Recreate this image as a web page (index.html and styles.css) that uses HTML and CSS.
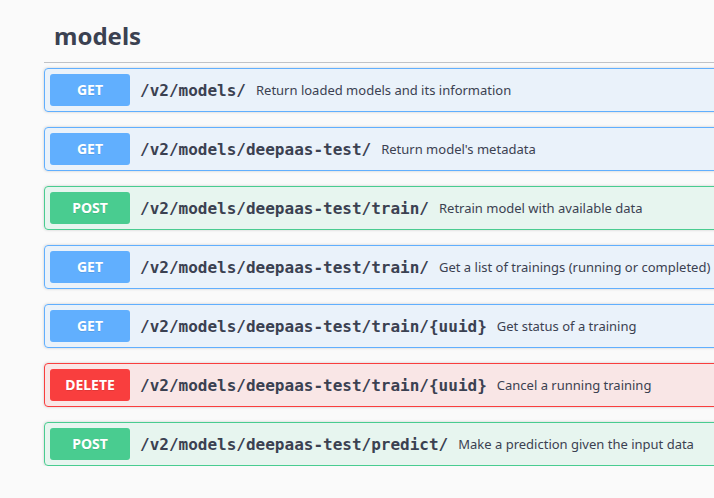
FILE: index.html
```html
<!DOCTYPE html>
<html>
<head>
<meta charset="utf-8">
<link rel="stylesheet" href="styles.css">
</head>
<body>
<div class="wrapper">
  <h3 class="tag">models</h3>
  <div class="ops">
    <div class="op get">
      <span class="method">GET</span>
      <span class="path">/v2/models/</span>
      <span class="desc">Return loaded models and its information</span>
    </div>
    <div class="op get">
      <span class="method">GET</span>
      <span class="path">/v2/models/deepaas-test/</span>
      <span class="desc">Return model's metadata</span>
    </div>
    <div class="op post">
      <span class="method">POST</span>
      <span class="path">/v2/models/deepaas-test/train/</span>
      <span class="desc">Retrain model with available data</span>
    </div>
    <div class="op get">
      <span class="method">GET</span>
      <span class="path">/v2/models/deepaas-test/train/</span>
      <span class="desc">Get a list of trainings (running or completed)</span>
    </div>
    <div class="op get">
      <span class="method">GET</span>
      <span class="path">/v2/models/deepaas-test/train/{uuid}</span>
      <span class="desc">Get status of a training</span>
    </div>
    <div class="op delete">
      <span class="method">DELETE</span>
      <span class="path">/v2/models/deepaas-test/train/{uuid}</span>
      <span class="desc">Cancel a running training</span>
    </div>
    <div class="op post">
      <span class="method">POST</span>
      <span class="path">/v2/models/deepaas-test/predict/</span>
      <span class="desc">Make a prediction given the input data</span>
    </div>
  </div>
</div>
</body>
</html>
```

FILE: styles.css
```css
html, body {
  margin: 0;
  padding: 0;
  background: #fafafa;
  overflow: hidden;
}
body {
  font-family: "Noto Sans", "Open Sans", sans-serif;
  color: #3b4151;
}
.wrapper {
  width: 1000px;
  padding: 9px 0 0 44px;
}
.tag {
  margin: 0 0 5px 0;
  padding: 10px 20px 10px 10px;
  font-size: 24px;
  font-weight: 700;
  line-height: normal;
  border-bottom: 1px solid rgba(59, 65, 81, 0.3);
}
.ops {
  display: flex;
  flex-direction: column;
  gap: 15px;
}
.op {
  display: flex;
  align-items: center;
  padding: 5px;
  border: 1px solid;
  border-radius: 4px;
  box-shadow: 0 0 3px rgba(0, 0, 0, 0.19);
}
.op.get { background: rgba(97, 175, 254, 0.1); border-color: #61affe; }
.op.post { background: rgba(73, 204, 144, 0.1); border-color: #49cc90; }
.op.delete { background: rgba(249, 62, 62, 0.1); border-color: #f93e3e; }
.method {
  min-width: 80px;
  padding: 6px 0;
  font-size: 14px;
  line-height: 20px;
  font-weight: 700;
  text-align: center;
  color: #fff;
  border-radius: 3px;
  text-shadow: 0 1px 0 rgba(0, 0, 0, 0.1);
}
.get .method { background: #61affe; }
.post .method { background: #49cc90; }
.delete .method { background: #f93e3e; }
.path {
  padding: 0 10px;
  font-family: "DejaVu Sans Mono", monospace;
  font-size: 16px;
  font-weight: 600;
  color: #3b4151;
}
.desc {
  font-size: 13px;
  color: #3b4151;
}
```
